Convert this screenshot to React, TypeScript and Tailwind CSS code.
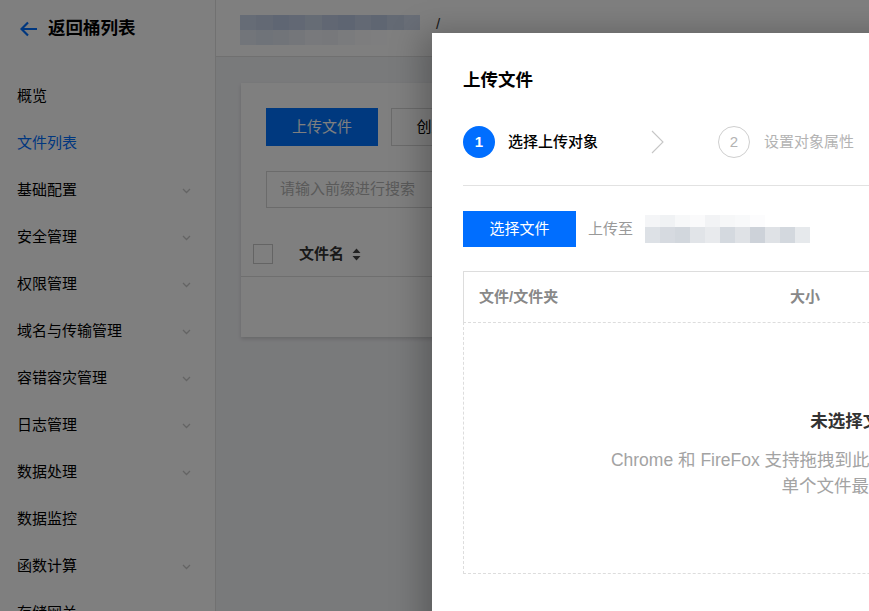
import React from "react";

const font = { fontFamily: '"Liberation Sans", "Noto Sans CJK SC", sans-serif' };

function Chevron() {
  return (
    <svg width="9" height="6" viewBox="0 0 9 6" className="shrink-0">
      <path d="M1 1 L4.5 4.5 L8 1" fill="none" stroke="#c8c8c8" strokeWidth="1.3" />
    </svg>
  );
}

const navItems: { label: string; active?: boolean; arrow?: boolean }[] = [
  { label: "概览" },
  { label: "文件列表", active: true },
  { label: "基础配置", arrow: true },
  { label: "安全管理", arrow: true },
  { label: "权限管理", arrow: true },
  { label: "域名与传输管理", arrow: true },
  { label: "容错容灾管理", arrow: true },
  { label: "日志管理", arrow: true },
  { label: "数据处理", arrow: true },
  { label: "数据监控" },
  { label: "函数计算", arrow: true },
  { label: "存储网关", arrow: true },
];

const crumbTop = ["#cdd9ec", "#c6d3e8", "#bfcde6", "#c4d1e8", "#cdd8ea", "#c2cfe6", "#bccbe4", "#c7d3e8", "#bfcde5", "#c9d5e9", "#d3ddee"];
const crumbBot = ["#e4eaf4", "#dfe6f2", "#e3e9f3", "#e8edf5", "#f0f3f8", "#eef1f7", "#f5f7fa", "#fafbfc", "#fdfdfe", "#ffffff", "#ffffff"];

const blobTop = ["#f4f5f7", "#f0f2f4", "#f7f8f9", "#fafafb", "#f2f3f5", "#f6f7f8", "#f8f9fa", "#fcfcfd", "#ffffff", "#ffffff", "#ffffff"];
const blobBot = ["#dde1e6", "#d6dae0", "#d2d7dd", "#e1e4e8", "#e8eaed", "#d4d9df", "#dfe2e6", "#cdd2d9", "#dfe2e6", "#d3d8de", "#e6e9ec"];

export default function App() {
  return (
    <div className="relative w-[869px] h-[611px] overflow-hidden bg-[#f3f4f7]" style={font}>
      <div className="flex h-full">
        {/* Sidebar */}
        <aside className="w-[216px] shrink-0 h-full overflow-hidden bg-white border-r border-[#e3e3e3] flex flex-col">
          <div className="h-[57px] shrink-0 flex items-center pl-[20px] gap-[10px]">
            <svg width="18" height="16" viewBox="0 0 18 16">
              <path d="M17 8 H2 M8 1.5 L1.5 8 L8 14.5" fill="none" stroke="#006eff" strokeWidth="2.2" />
            </svg>
            <span className="text-[17.5px] font-bold text-black">返回桶列表</span>
          </div>
          <nav className="pt-[16px] shrink-0">
            {navItems.map((it) => (
              <div key={it.label} className="h-[47px] flex items-center justify-between pl-[17px] pr-[24px]">
                <span className={`text-[15px] ${it.active ? "text-[#006eff]" : "text-black"}`}>{it.label}</span>
                {it.arrow && <Chevron />}
              </div>
            ))}
          </nav>
        </aside>

        {/* Main */}
        <main className="flex-1 flex flex-col min-w-0">
          <div className="h-[57px] shrink-0 bg-white border-b border-[#e0e0e0] flex items-start pl-[24px] pt-[15px] gap-[16px]">
            <div className="w-[180px] h-[30px] flex flex-col blur-[0.6px]">
              <div className="flex h-[15px]">
                {crumbTop.map((c, i) => (
                  <div key={i} className="flex-1" style={{ background: c }} />
                ))}
              </div>
              <div className="flex h-[15px]">
                {crumbBot.map((c, i) => (
                  <div key={i} className="flex-1" style={{ background: c }} />
                ))}
              </div>
            </div>
            <span className="text-[15px] text-[#333] leading-[18px]">/</span>
          </div>
          <div className="flex-1 pl-[25px] pt-[26px]">
            <div className="w-[600px] h-[254px] bg-white shadow-[0_2px_4px_rgba(0,0,0,0.15)] pt-[25px]">
              <div className="flex gap-[13px] pl-[25px]">
                <div className="w-[112px] h-[38px] bg-[#0073ff] text-white text-[15px] flex items-center justify-center">上传文件</div>
                <div className="w-[126px] h-[38px] border border-[#d6d6d6] text-black text-[15px] flex items-center justify-center">创建文件夹</div>
              </div>
              <div className="ml-[25px] mt-[25px] w-[400px] h-[37px] border border-[#d6d6d6] flex items-center pl-[13px] text-[15px] text-[#b5b5b5]">
                请输入前缀进行搜索
              </div>
              <div className="mt-[24px] h-[45px] border-b border-[#dedede] flex items-center pl-[12px]">
                <div className="w-[20px] h-[20px] border border-[#c9c9c9] bg-white" />
                <span className="ml-[26px] text-[15px] font-bold text-[#333]">文件名</span>
                <svg width="9" height="13" viewBox="0 0 9 13" className="ml-[8px]">
                  <path d="M4.5 0.5 L8.5 5 H0.5 Z M4.5 12.5 L8.5 8 H0.5 Z" fill="#444" />
                </svg>
              </div>
            </div>
          </div>
        </main>
      </div>

      {/* Overlay */}
      <div className="absolute inset-0 bg-black/50" />

      {/* Modal */}
      <div className="absolute left-[432px] top-[33px] w-[844px] h-[620px] bg-white shadow-[-10px_0_30px_rgba(0,0,0,0.25)] px-[31px] pt-[34px]">
        <div className="text-[17.5px] font-bold text-black leading-[26px]">上传文件</div>
        <div className="mt-[33px] h-[32px] flex items-center">
          <div className="w-[32px] h-[32px] rounded-full bg-[#006eff] text-white text-[15px] font-bold flex items-center justify-center">1</div>
          <span className="ml-[13px] text-[15px] font-medium text-black">选择上传对象</span>
          <svg width="13" height="24" viewBox="0 0 13 24" className="ml-[53px]">
            <path d="M1 1 L12 12 L1 23" fill="none" stroke="#c6c6c6" strokeWidth="1.1" />
          </svg>
          <div className="ml-[54px] w-[32px] h-[32px] rounded-full border border-[#cfcfcf] text-[#b3b3b3] text-[15px] flex items-center justify-center">2</div>
          <span className="ml-[14px] text-[15px] text-[#b3b3b3]">设置对象属性</span>
        </div>
        <div className="mt-[27px] h-px bg-[#e2e2e2]" />
        <div className="mt-[25px] flex items-center">
          <div className="w-[113px] h-[36px] bg-[#006eff] text-white text-[15px] flex items-center justify-center">选择文件</div>
          <span className="ml-[12px] text-[15px] text-[#999]">上传至</span>
          <div className="ml-[12px] w-[165px] h-[28px] flex flex-col blur-[0.4px]">
            <div className="flex h-[12px]">
              {blobTop.map((c, i) => (
                <div key={i} className="flex-1" style={{ background: c }} />
              ))}
            </div>
            <div className="flex h-[16px]">
              {blobBot.map((c, i) => (
                <div key={i} className="flex-1" style={{ background: c }} />
              ))}
            </div>
          </div>
        </div>
        <div className="mt-[24px] w-[782px]">
          <div className="h-[51px] border-t border-l border-r border-[#dddddd] flex items-center pl-[15px]">
            <span className="w-[311px] text-[15px] font-bold text-[#888]">文件/文件夹</span>
            <span className="text-[15px] font-bold text-[#888]">大小</span>
          </div>
          <div className="h-[252px] border border-dashed border-[#dddddd] text-center pt-[85px]">
            <div className="text-[17.5px] font-bold text-[#333] leading-[26px]">未选择文件</div>
            <div className="mt-[13px] text-[17.5px] text-[#a3a3a3] leading-[26px]">
              Chrome 和 FireFox 支持拖拽到此处上传，或点击上方按钮选择
            </div>
            <div className="text-[17.5px] text-[#a3a3a3] leading-[26px]">单个文件最大 5GB</div>
          </div>
        </div>
      </div>
    </div>
  );
}
